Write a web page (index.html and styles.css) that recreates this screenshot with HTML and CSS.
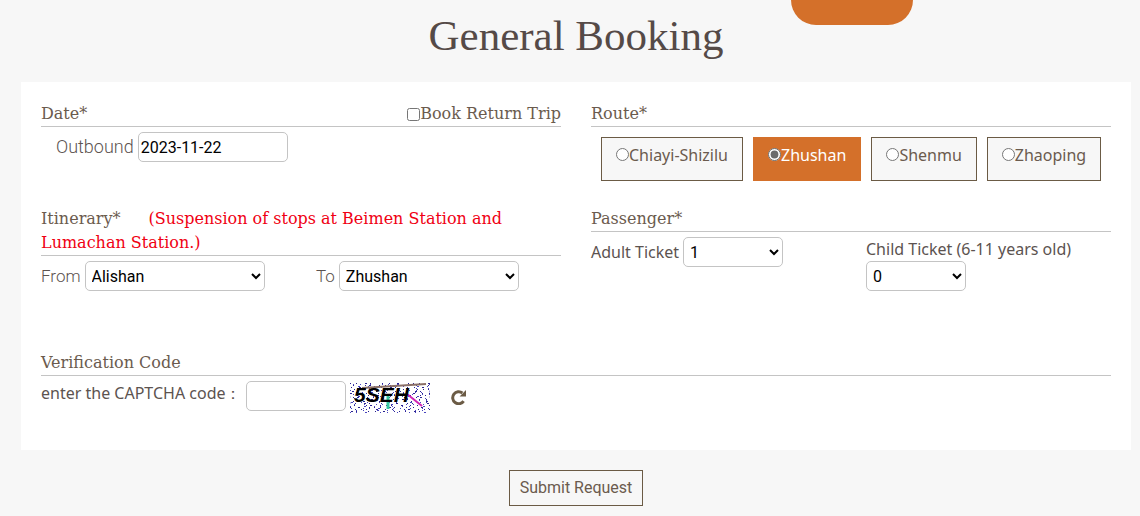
FILE: index.html
```html
<!DOCTYPE html>
<html lang="en">
<head>
<meta charset="utf-8">
<title>General Booking</title>
<link rel="stylesheet" href="styles.css">
</head>
<body>
<div class="tab"></div>
<main class="page">
  <h1 class="page-title">General Booking</h1>
  <form class="booking">
    <div class="panel">
      <section class="block">
        <div class="heading">
          <h2 class="heading-text">Date*</h2>
          <label class="return"><input class="check" type="checkbox">Book Return Trip</label>
        </div>
        <div class="field indent">
          <label class="label plain large" for="outbound">Outbound</label>
          <input class="control date" id="outbound" type="text" value="2023-11-22">
        </div>
      </section>
      <section class="block">
        <div class="heading"><h2 class="heading-text">Route*</h2></div>
        <div class="routes">
          <label class="route"><input class="check" type="radio" name="route">Chiayi-Shizilu</label>
          <label class="route selected"><input class="check" type="radio" name="route" checked>Zhushan</label>
          <label class="route"><input class="check" type="radio" name="route">Shenmu</label>
          <label class="route"><input class="check" type="radio" name="route">Zhaoping</label>
        </div>
      </section>
      <section class="block tall">
        <div class="heading"><h2 class="heading-text">Itinerary*<span class="notice">(Suspension of stops at Beimen Station and Lumachan Station.)</span></h2></div>
        <div class="pair">
          <div class="field">
            <label class="label plain" for="from">From</label>
            <select class="control station" id="from"><option>Alishan</option></select>
          </div>
          <div class="field">
            <label class="label plain" for="to">To</label>
            <select class="control station" id="to"><option>Zhushan</option></select>
          </div>
        </div>
      </section>
      <section class="block tall">
        <div class="heading"><h2 class="heading-text">Passenger*</h2></div>
        <div class="pair">
          <div class="field">
            <label class="label" for="adult">Adult Ticket</label>
            <select class="control short" id="adult"><option>1</option></select>
          </div>
          <div class="field stacked">
            <label class="label" for="child">Child Ticket (6-11 years old)</label>
            <select class="control short" id="child"><option>0</option></select>
          </div>
        </div>
      </section>
      <section class="block wide">
        <div class="heading"><h2 class="heading-text">Verification Code</h2></div>
        <div class="field verify">
          <label class="label" for="code">enter the CAPTCHA code：</label>
          <input class="control short" id="code" type="text">
          <svg class="captcha" viewBox="0 0 80 30" role="img" aria-label="Captcha">
            <path class="noise" d="M0 .5H80V2.5H0V4.5H80V6.5H0V8.5H80V10.5H0V12.5H80V14.5H0V16.5H80V18.5H0V20.5H80V22.5H0V24.5H80V26.5H0V28.5H80"/>
            <path class="noise fine" d="M80 1.5H0V3.5H80V5.5H0V7.5H80V9.5H0V11.5H80V13.5H0V15.5H80V17.5H0V19.5H80V21.5H0V23.5H80V25.5H0V27.5H80V29.5H0"/>
            <path d="M12 5L76 1" stroke="#8a6f66" stroke-width="2"/>
            <path d="M38 11V26" stroke="#38c9a0" stroke-width="3"/>
            <path d="M57 11L72 23" stroke="#d025b5" stroke-width="2"/>
            <text class="captcha-text" x="4" y="19">5SEH</text>
          </svg>
          <button class="refresh" type="button" aria-label="New code">
            <svg width="16" height="16" viewBox="0 0 16 16" fill="none"><path d="M13.6 12.2A6 6 0 1 1 12.4 4" stroke="#6b5b45" stroke-width="3"/><path d="M16 1V7.4H9.6Z" fill="#6b5b45"/></svg>
          </button>
        </div>
      </section>
    </div>
    <button class="submit" type="submit">Submit Request</button>
  </form>
</main>
</body>
</html>
```
FILE: styles.css
```css
* { box-sizing: border-box; }
body {
  margin: 0;
  background: #f7f7f7;
  color: #5c5350;
  font: 400 16px/24px "Noto Sans", sans-serif;
}
.tab {
  position: absolute;
  top: 0;
  right: 227px;
  width: 122px;
  height: 25px;
  border-radius: 0 0 25px 25px;
  background: #d4702a;
}
.page { padding: 12px 9px 10px 21px; }
.page-title {
  margin: 0 0 22px;
  color: #554a47;
  font: 400 43px/48px "Liberation Serif", serif;
  text-align: center;
}
.booking { display: flex; flex-direction: column; align-items: center; gap: 20px; }
.panel {
  width: 100%;
  display: grid;
  grid-template-columns: 1fr 1fr;
  column-gap: 30px;
  padding: 20px 20px 37px;
  background: #fff;
}
.block { min-height: 105px; }
.tall { min-height: 144px; }
.wide { grid-column: 1 / -1; min-height: 60px; }
.heading {
  display: flex;
  justify-content: space-between;
  border-bottom: 1px solid #c4c4c4;
  color: #6b5b4e;
  font: 400 16px/24px "DejaVu Serif", serif;
}
.heading-text { margin: 0; font: inherit; }
.return { display: flex; align-items: center; }
.check { width: 13px; height: 13px; margin: 0; flex: none; accent-color: #6b6b6b; }
.notice { margin-left: 28px; color: #f00013; }
.field { display: flex; align-items: center; gap: 4px; padding-top: 5px; }
.indent { padding-left: 15px; }
.pair { display: grid; grid-template-columns: 1fr 1fr; column-gap: 30px; align-items: start; }
.stacked { flex-direction: column; align-items: flex-start; gap: 0; }
.label { white-space: nowrap; }
.plain { font: 300 17px/24px Roboto, sans-serif; }
.large { font-size: 18px; }
.control {
  height: 30px;
  padding: 0 2px;
  border: 1px solid #c4c4c4;
  border-radius: 5px;
  background: #fff;
  color: #000;
  font: 400 16px/24px Roboto, sans-serif;
}
.date { width: 150px; }
.station { width: 180px; }
.short { width: 100px; }
.routes { display: flex; flex-wrap: wrap; gap: 10px; padding: 10px 0 0 10px; }
.route {
  display: flex;
  align-items: flex-start;
  height: 44px;
  padding: 5px 14px;
  border: 1px solid #6b5b45;
  background: #f7f7f7;
  color: #6b5b4e;
}
.route .check { margin-top: 5px; }
.selected { border-color: #d4702a; background: #d4702a; color: #fff; }
.verify { align-items: flex-start; }
.captcha { width: 80px; height: 30px; margin-top: 2px; }
.noise { fill: none; stroke: #2a2390; stroke-dasharray: 1 5 1 8 2 3 1 11 1 6 1 7 2 9 1 4; }
.fine { stroke: #4a45c0; stroke-dasharray: 1 9 1 6 1 13 2 8 1 5 1 11; }
.captcha-text { fill: #000; font: italic 700 21px "Liberation Sans", sans-serif; }
.refresh { display: flex; margin: 8px 0 0 16px; padding: 0; border: 0; background: none; }
.submit {
  height: 36px;
  padding: 0 10px;
  border: 1px solid #6b5b45;
  background: #f7f7f7;
  color: #6b5b4e;
  font: 400 16px/24px Roboto, sans-serif;
}
```
